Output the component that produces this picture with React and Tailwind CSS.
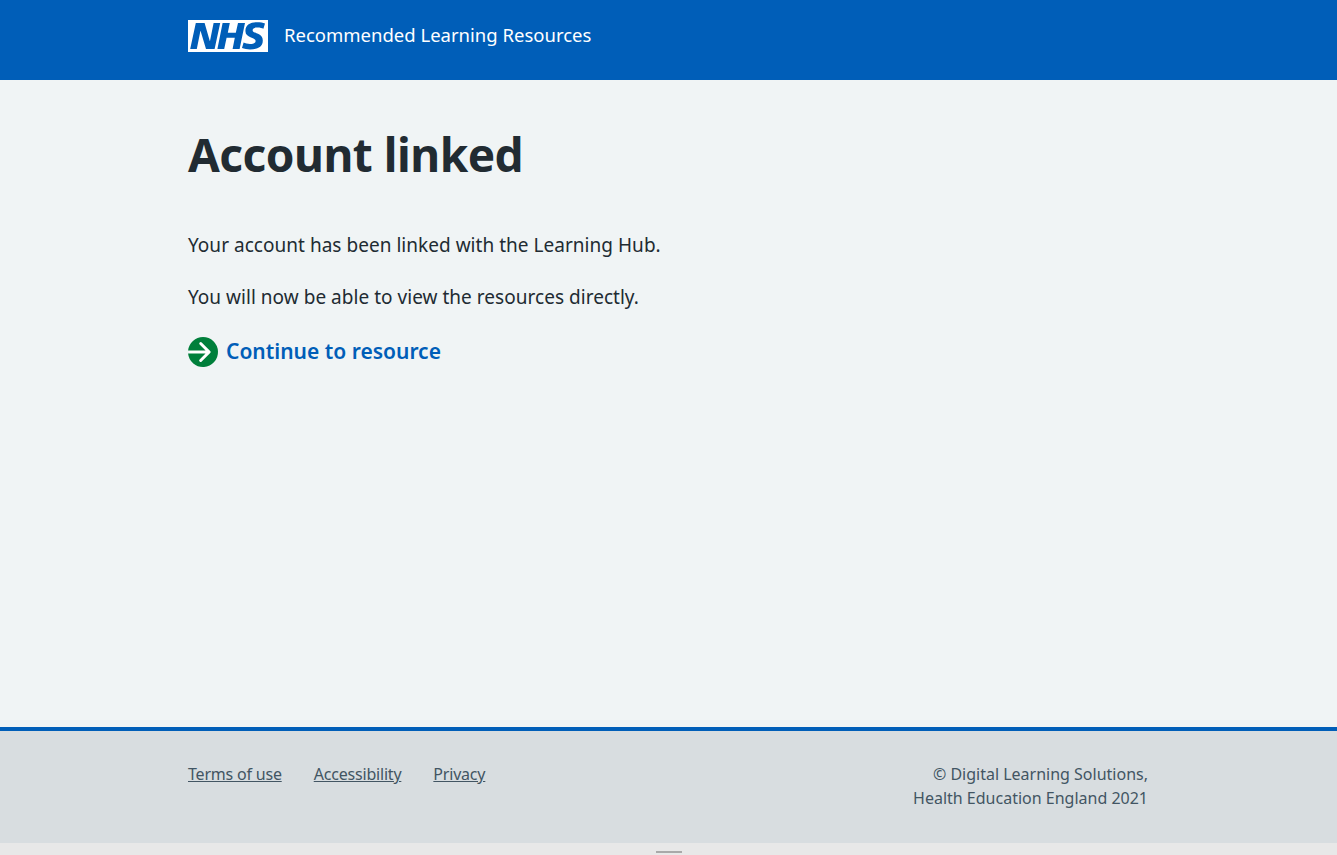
export default function App() {
  return (
    <div className="flex h-[855px] flex-col overflow-hidden bg-[#f0f4f5] text-[#212b32] font-['Noto_Sans',sans-serif]">
      <header className="h-20 shrink-0 bg-[#005eb8]">
        <div className="mx-auto flex h-full w-[961px] items-center gap-4 pr-px pb-[9px]">
          <svg className="h-8 w-20 shrink-0" viewBox="0 0 40 16" aria-label="NHS">
            <path fill="#fff" d="M0 0h40v16H0z" />
            <path fill="#005eb8" d="M3.9 1.5h4.4l2.6 9h.1l1.8-9h3.3l-2.8 13H9l-2.7-9h-.1l-1.8 9H1.1M17.3 1.5h3.6l-1 4.9h4L25 1.5h3.5l-2.7 13h-3.5l1.1-5.6h-4.1l-1.2 5.6h-3.4M37.7 4.4c-.7-.3-1.6-.6-2.9-.6-1.4 0-2.5.2-2.5 1.3 0 1.8 5.1 1.2 5.1 5.1 0 3.6-3.3 4.5-6.4 4.5-1.3 0-2.9-.3-4-.7l.8-2.7c.7.4 2.1.7 3.2.7s2.8-.2 2.8-1.5c0-2.1-5.1-1.3-5.1-5 0-3.4 2.9-4.4 5.8-4.4 1.6 0 3.1.2 4 .6" />
          </svg>
          <span className="pb-[1px] text-[18.5px] leading-7 text-white">Recommended Learning Resources</span>
        </div>
      </header>

      <main className="mx-auto w-[961px] flex-1 pt-[47px] pr-px">
        <h1 className="mb-[50px] text-[46px] font-bold leading-[54px] tracking-[-0.5px]">Account linked</h1>
        <p className="mb-6 text-[19px] leading-7 tracking-[0.03px]">Your account has been linked with the Learning Hub.</p>
        <p className="mb-[23px] text-[19px] leading-7 tracking-[0.03px]">You will now be able to view the resources directly.</p>
        <a href="#" className="flex items-center gap-[5px] text-[21px] font-semibold leading-8 text-[#005eb8]">
          <svg className="-ml-[3px] h-9 w-9 shrink-0" viewBox="0 0 24 24" aria-hidden="true">
            <circle cx="12" cy="12" r="9" fill="#fff" />
            <path fill="#007f3b" d="M12 2a10 10 0 0 0-9.95 9h11.64L9.74 7.05a1 1 0 0 1 1.41-1.41l5.66 5.65a1 1 0 0 1 0 1.42l-5.66 5.65a1 1 0 0 1-1.41 0 1 1 0 0 1 0-1.41L13.69 13H2.05A10 10 0 1 0 12 2z" />
          </svg>
          <span className="pb-[2px]">Continue to resource</span>
        </a>
      </main>

      <footer className="h-[116px] shrink-0 border-t-4 border-[#005eb8] bg-[#d8dde0] text-[16px] leading-6 text-[#425563]">
        <div className="mx-auto flex w-[961px] justify-between pt-[31px] pr-px">
          <ul className="flex gap-8 tracking-[-0.2px]">
            <li><a href="#" className="underline">Terms of use</a></li>
            <li><a href="#" className="underline">Accessibility</a></li>
            <li><a href="#" className="underline">Privacy</a></li>
          </ul>
          <p className="text-right">© Digital Learning Solutions,<br />Health Education England 2021</p>
        </div>
      </footer>

      <div className="flex h-3 shrink-0 items-end justify-center bg-[#e8e8e8] pb-[2px]">
        <div className="h-[2px] w-[26px] bg-[#a9a9a9]" />
      </div>
    </div>
  );
}
